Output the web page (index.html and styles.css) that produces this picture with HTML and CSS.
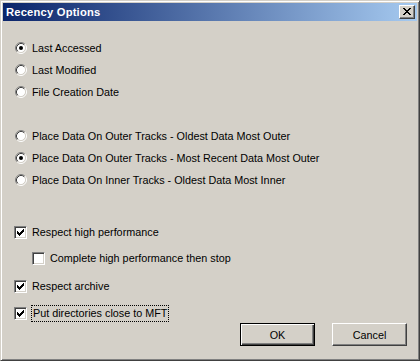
FILE: index.html
```html
<!DOCTYPE html>
<html lang="en">
  <head>
    <meta charset="UTF-8" />
    <title>Recency Options</title>
    <link rel="stylesheet" href="styles.css">
  </head>
  <body>
    <div class="window">
      <div class="titlebar">
        <span class="title">Recency Options</span>
        <span class="close-btn">
          <svg width="8" height="7" viewBox="0 0 8 7">
            <path d="M0 0h2v1H0z M6 0h2v1H6z M1 1h2v1H1z M5 1h2v1H5z M2 2h4v1H2z M3 3h2v1H3z M2 4h4v1H2z M1 5h2v1H1z M5 5h2v1H5z M0 6h2v1H0z M6 6h2v1H6z" fill="#000"/>
          </svg>
        </span>
      </div>

      <div class="content">
        <div class="group">
          <div class="row radio-row">
            <svg class="radio checked" width="12" height="12" viewBox="0 0 12 12">
              <circle cx="6" cy="6" r="4.5" fill="#fff"/>
              <path d="M2.11 9.89A5.5 5.5 0 0 1 9.89 2.11" class="r-dark"/>
              <path d="M9.89 2.11A5.5 5.5 0 0 1 2.11 9.89" class="r-light"/>
              <path d="M2.82 9.18A4.5 4.5 0 0 1 9.18 2.82" class="r-darker"/>
              <path d="M9.18 2.82A4.5 4.5 0 0 1 2.82 9.18" class="r-face"/>
              <circle cx="6" cy="6" r="2" class="dot"/>
            </svg>
            <span>Last Accessed</span>
          </div>
          <div class="row radio-row">
            <svg class="radio" width="12" height="12" viewBox="0 0 12 12">
              <circle cx="6" cy="6" r="4.5" fill="#fff"/>
              <path d="M2.11 9.89A5.5 5.5 0 0 1 9.89 2.11" class="r-dark"/>
              <path d="M9.89 2.11A5.5 5.5 0 0 1 2.11 9.89" class="r-light"/>
              <path d="M2.82 9.18A4.5 4.5 0 0 1 9.18 2.82" class="r-darker"/>
              <path d="M9.18 2.82A4.5 4.5 0 0 1 2.82 9.18" class="r-face"/>
            </svg>
            <span>Last Modified</span>
          </div>
          <div class="row radio-row">
            <svg class="radio" width="12" height="12" viewBox="0 0 12 12">
              <circle cx="6" cy="6" r="4.5" fill="#fff"/>
              <path d="M2.11 9.89A5.5 5.5 0 0 1 9.89 2.11" class="r-dark"/>
              <path d="M9.89 2.11A5.5 5.5 0 0 1 2.11 9.89" class="r-light"/>
              <path d="M2.82 9.18A4.5 4.5 0 0 1 9.18 2.82" class="r-darker"/>
              <path d="M9.18 2.82A4.5 4.5 0 0 1 2.82 9.18" class="r-face"/>
            </svg>
            <span>File Creation Date</span>
          </div>
        </div>

        <div class="group tracks">
          <div class="row radio-row">
            <svg class="radio" width="12" height="12" viewBox="0 0 12 12">
              <circle cx="6" cy="6" r="4.5" fill="#fff"/>
              <path d="M2.11 9.89A5.5 5.5 0 0 1 9.89 2.11" class="r-dark"/>
              <path d="M9.89 2.11A5.5 5.5 0 0 1 2.11 9.89" class="r-light"/>
              <path d="M2.82 9.18A4.5 4.5 0 0 1 9.18 2.82" class="r-darker"/>
              <path d="M9.18 2.82A4.5 4.5 0 0 1 2.82 9.18" class="r-face"/>
            </svg>
            <span>Place Data On Outer Tracks - Oldest Data Most Outer</span>
          </div>
          <div class="row radio-row">
            <svg class="radio checked" width="12" height="12" viewBox="0 0 12 12">
              <circle cx="6" cy="6" r="4.5" fill="#fff"/>
              <path d="M2.11 9.89A5.5 5.5 0 0 1 9.89 2.11" class="r-dark"/>
              <path d="M9.89 2.11A5.5 5.5 0 0 1 2.11 9.89" class="r-light"/>
              <path d="M2.82 9.18A4.5 4.5 0 0 1 9.18 2.82" class="r-darker"/>
              <path d="M9.18 2.82A4.5 4.5 0 0 1 2.82 9.18" class="r-face"/>
              <circle cx="6" cy="6" r="2" class="dot"/>
            </svg>
            <span>Place Data On Outer Tracks - Most Recent Data Most Outer</span>
          </div>
          <div class="row radio-row">
            <svg class="radio" width="12" height="12" viewBox="0 0 12 12">
              <circle cx="6" cy="6" r="4.5" fill="#fff"/>
              <path d="M2.11 9.89A5.5 5.5 0 0 1 9.89 2.11" class="r-dark"/>
              <path d="M9.89 2.11A5.5 5.5 0 0 1 2.11 9.89" class="r-light"/>
              <path d="M2.82 9.18A4.5 4.5 0 0 1 9.18 2.82" class="r-darker"/>
              <path d="M9.18 2.82A4.5 4.5 0 0 1 2.82 9.18" class="r-face"/>
            </svg>
            <span>Place Data On Inner Tracks - Oldest Data Most Inner</span>
          </div>
        </div>

        <div class="row check-row perf">
          <span class="checkbox">
            <svg width="7" height="7" viewBox="0 0 7 7"><path d="M0.5 2v3M1.5 3v3M2.5 4v3M3.5 3v3M4.5 2v3M5.5 1v3M6.5 0v3" stroke="#000"/></svg>
          </span>
          <span>Respect high performance</span>
        </div>
        <div class="row check-row nested">
          <span class="checkbox"></span>
          <span>Complete high performance then stop</span>
        </div>
        <div class="row check-row archive">
          <span class="checkbox">
            <svg width="7" height="7" viewBox="0 0 7 7"><path d="M0.5 2v3M1.5 3v3M2.5 4v3M3.5 3v3M4.5 2v3M5.5 1v3M6.5 0v3" stroke="#000"/></svg>
          </span>
          <span>Respect archive</span>
        </div>

        <div class="footer">
          <div class="row check-row">
            <span class="checkbox">
              <svg width="7" height="7" viewBox="0 0 7 7"><path d="M0.5 2v3M1.5 3v3M2.5 4v3M3.5 3v3M4.5 2v3M5.5 1v3M6.5 0v3" stroke="#000"/></svg>
            </span>
            <span class="focused">Put directories close to MFT</span>
          </div>
          <div class="buttons">
            <button class="btn default">OK</button>
            <button class="btn">Cancel</button>
          </div>
        </div>
      </div>
    </div>
  </body>
</html>
```

FILE: styles.css
```css
body {
  margin: 0;
  width: 420px;
  height: 361px;
  background-color: #d4d0c8;
  font-family: "Liberation Sans", Arial, sans-serif;
  font-size: 10.8px;
  color: #000;
  overflow: hidden;
}
.window {
  box-sizing: border-box;
  width: 420px;
  height: 361px;
  border: 1px solid;
  border-color: #d4d0c8 #404040 #404040 #d4d0c8;
  box-shadow: inset 1px 1px #fff, inset -1px -1px #808080;
  padding: 2px;
  display: flex;
  flex-direction: column;
}
.titlebar {
  height: 18px;
  display: flex;
  align-items: center;
  justify-content: space-between;
  padding-left: 3px;
  background: linear-gradient(to right, #0a246a, #a6caf0);
}
.title {
  color: #fff;
  font-weight: bold;
  font-size: 11.2px;
  letter-spacing: 0.2px;
}
.close-btn {
  box-sizing: border-box;
  width: 16px;
  height: 14px;
  margin-right: 2px;
  background-color: #d4d0c8;
  border: 1px solid;
  border-color: #fff #404040 #404040 #fff;
  box-shadow: inset -1px -1px #808080;
  display: flex;
  padding: 2px 0 0 3px;
}
.close-btn svg {
  display: block;
}
.content {
  flex: 1;
  display: flex;
  flex-direction: column;
  padding-top: 16px;
}
.row {
  display: flex;
  align-items: center;
  gap: 5px;
  height: 22px;
}
.radio-row {
  padding-left: 12px;
}
.check-row {
  padding-left: 11px;
}
.radio {
  display: block;
  fill: none;
  stroke-width: 1;
}
.r-dark {
  stroke: #808080;
}
.r-light {
  stroke: #fff;
}
.r-darker {
  stroke: #404040;
}
.r-face {
  stroke: #d4d0c8;
}
.dot {
  fill: #000;
  stroke: none;
}
.tracks {
  margin-top: 22px;
}
.checkbox {
  box-sizing: border-box;
  width: 13px;
  height: 13px;
  background-color: #fff;
  border: 1px solid;
  border-color: #808080 #fff #fff #808080;
  box-shadow: inset 1px 1px #404040, inset -1px -1px #d4d0c8;
  padding: 2px 0 0 2px;
  flex-shrink: 0;
}
.checkbox svg {
  display: block;
}
.perf {
  margin-top: 30px;
}
.nested {
  margin-top: 4px;
  padding-left: 29px;
}
.archive {
  margin-top: 6px;
}
.footer {
  margin-top: 5px;
  height: 44px;
  display: flex;
  justify-content: space-between;
  padding-right: 10px;
}
.focused {
  outline: 1px dotted #000;
  padding: 1px 1px;
  line-height: 13px;
}
.buttons {
  align-self: flex-end;
  display: flex;
  gap: 17px;
}
.btn {
  box-sizing: border-box;
  width: 75px;
  height: 23px;
  padding: 0;
  background-color: #d4d0c8;
  font-family: "Liberation Sans", Arial, sans-serif;
  font-size: 10.8px;
  color: #000;
  border: 1px solid;
  border-color: #fff #404040 #404040 #fff;
  box-shadow: inset -1px -1px #808080;
}
.btn.default {
  border-color: #000;
  box-shadow: inset 1px 1px #fff, inset -1px -1px #404040, inset -2px -2px #808080;
}
```
